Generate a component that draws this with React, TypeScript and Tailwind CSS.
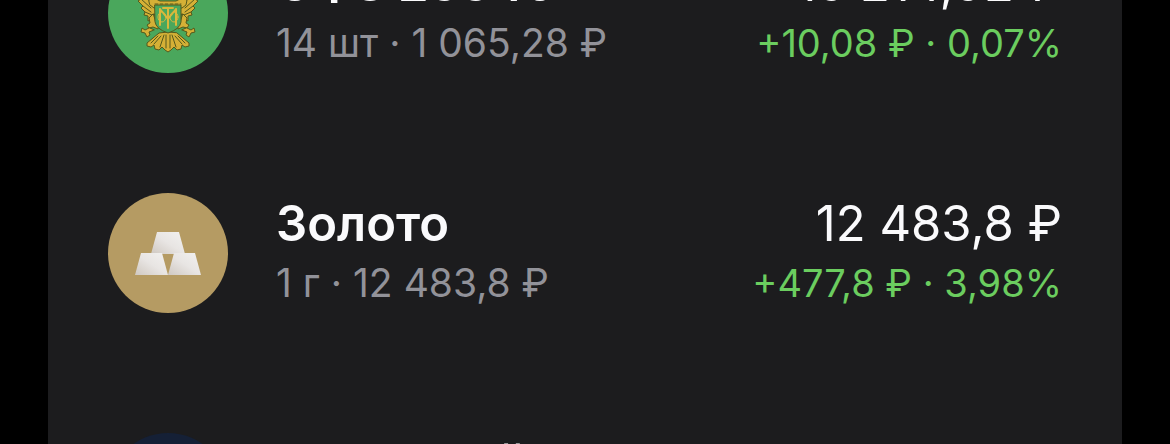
import { ReactNode } from 'react';

interface Asset {
  name: string;
  holding: string;
  value: string;
  profit: string;
  iconClass: string;
  icon?: ReactNode;
}

function EagleIcon() {
  return (
    <svg
      viewBox="0 12 80 110"
      className="h-[110px] w-20"
      fill="#d5b036"
      stroke="#55591c"
      strokeWidth="1"
      strokeLinejoin="round"
      strokeLinecap="round"
      aria-hidden="true"
    >
      {/* heads */}
      <path d="M24 30 L32 24 L40 36 L48 24 L56 30 L57 50 L23 50 Z" />
      {/* wings */}
      <path d="M30 50 L8 30 L4 44 L13 53 L10 55 L15 60 L13 62 L17 66 L16 69 L20 70 L20 75 L24 73 L28 66 Z" />
      <path d="M50 50 L72 30 L76 44 L67 53 L70 55 L65 60 L67 62 L63 66 L64 69 L60 70 L60 75 L56 73 L52 66 Z" />
      <path
        d="M13 53 L23 62 M15 60 L23 66 M17 66 L24 69 M17 48 L26 58 M67 53 L57 62 M65 60 L57 66 M63 66 L56 69 M63 48 L54 58"
        fill="none"
      />
      {/* chain over the shield */}
      <path d="M21 54 L26 52 L32 55 H48 L54 52 L59 54 L58 59 L54 62 H26 L22 59 Z" />
      <path d="M27 58 H53" fill="none" strokeDasharray="3 2" />
      {/* legs with claws */}
      <path d="M25 68 L21 72 L22 77 L19 79 L21 82 L25 81 L30 83 L31 78 L28 76 Z" />
      <path d="M55 68 L59 72 L58 77 L61 79 L59 82 L55 81 L50 83 L49 78 L52 76 Z" />
      <path d="M21 82 L17 84 L14 82 L13 86 L17 87 L19 91 L22 89 L21 86 L26 84 Z" />
      <path d="M59 82 L63 84 L66 82 L67 86 L63 87 L61 91 L58 89 L59 86 L54 84 Z" />
      {/* tail */}
      <path d="M40 86 L31 87 L25 92 L19 97 L19 100 L23 101 L26 99 L27 103 L31 104 L34 101 L37 104 L40 106 L43 104 L46 101 L49 104 L53 103 L54 99 L57 101 L61 100 L61 97 L55 92 L49 87 Z" />
      <path
        d="M38 89 V102 M42 89 V102 M36 89 L32 101 M44 89 L48 101 M33 90 L26 98 M47 90 L54 98 M30 90 L23 97 M50 90 L57 97"
        fill="none"
      />
      {/* shield */}
      <path d="M27 59 H53 V76 Q52 83 40 87 Q28 83 27 76 Z" fill="#4aa75c" />
      <g fill="none" stroke="#d9b83c" strokeWidth="2">
        <path d="M32 63 V79 M48 63 V79 M32 63 L40 73 L48 63 M40 62 V82 M35 62 H45" />
        <ellipse cx="34" cy="71" rx="4" ry="5" strokeWidth="1" />
        <ellipse cx="46" cy="71" rx="4" ry="5" strokeWidth="1" />
      </g>
    </svg>
  );
}

function GoldBarsIcon() {
  return (
    <svg viewBox="0 0 66 43" className="h-[43px] w-[66px]" aria-hidden="true">
      <defs>
        <linearGradient id="bar" x1="1" y1="0" x2="0" y2="1">
          <stop offset="0" stopColor="#f2f1f0" />
          <stop offset="0.5" stopColor="#e8e5e3" />
          <stop offset="1" stopColor="#cfc8c1" />
        </linearGradient>
      </defs>
      <path d="M22 0 H44 L50 22 H16 Z" fill="url(#bar)" />
      <path d="M6 21 H27 L33 43 H0 Z" fill="url(#bar)" />
      <path d="M39 21 H60 L66 43 H33 Z" fill="url(#bar)" />
    </svg>
  );
}

const assets: Asset[] = [
  {
    name: 'ОФЗ 26640',
    holding: '14 шт · 1 065,28 ₽',
    value: '15 214,92 ₽',
    profit: '+10,08 ₽ · 0,07%',
    iconClass: 'bg-[#4aa75c]',
    icon: <EagleIcon />,
  },
  {
    name: 'Золото',
    holding: '1 г · 12 483,8 ₽',
    value: '12 483,8 ₽',
    profit: '+477,8 ₽ · 3,98%',
    iconClass: 'bg-[#b59b63]',
    icon: <GoldBarsIcon />,
  },
  {
    name: 'Северный',
    holding: '1 шт · 100 ₽',
    value: '100 ₽',
    profit: '+1 ₽ · 1%',
    iconClass: 'bg-[#152036]',
  },
];

function AssetRow({ asset }: { asset: Asset }) {
  return (
    <li className="flex h-60 items-center px-[60px]">
      <div
        className={`flex size-[120px] shrink-0 items-center justify-center overflow-hidden rounded-full ${asset.iconClass}`}
      >
        {asset.icon}
      </div>
      <div className="ml-12 flex flex-1 flex-col whitespace-nowrap">
        <div className="flex justify-between text-[49px] leading-[60px] text-[#fafafc]">
          <h2 className="font-semibold">{asset.name}</h2>
          <span>{asset.value}</span>
        </div>
        <div className="flex justify-between leading-[58px]">
          <span className="text-[39px] text-[#929299]">{asset.holding}</span>
          <span className="text-[38px] text-[#6bcd5f]">{asset.profit}</span>
        </div>
      </div>
    </li>
  );
}

export default function App() {
  return (
    <main className="h-screen overflow-hidden bg-black px-12 font-['Inter',sans-serif]">
      <ul className="-mt-[107px] bg-[#1c1c1e]">
        {assets.map(asset => (
          <AssetRow key={asset.name} asset={asset} />
        ))}
      </ul>
    </main>
  );
}
